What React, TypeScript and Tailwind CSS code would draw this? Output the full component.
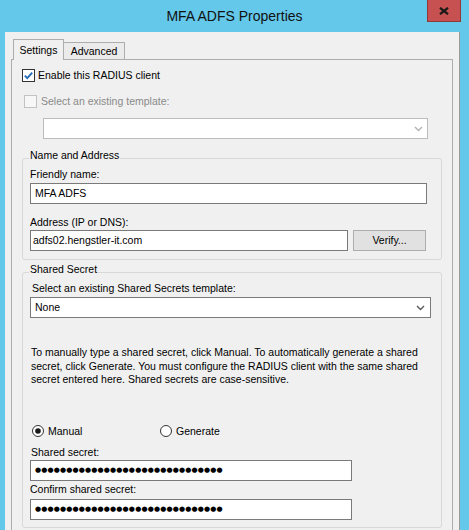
import React from "react";

function CheckBox({ checked, disabled }: { checked?: boolean; disabled?: boolean }) {
  return (
    <svg width="13" height="13" viewBox="0 0 13 13" className="shrink-0">
      <rect x="0.5" y="0.5" width="12" height="12" fill={disabled ? "#f7f7f7" : "#ffffff"} stroke={disabled ? "#c3c3c3" : "#333333"} />
      {checked && (
        <path d="M2.8 6.6 L5.3 9.1 L10.2 3.6" fill="none" stroke="#2b6fb8" strokeWidth="2" />
      )}
    </svg>
  );
}

function Radio({ checked }: { checked?: boolean }) {
  return (
    <svg width="12" height="12" viewBox="0 0 12 12" className="shrink-0">
      <circle cx="6" cy="6" r="5.5" fill="#ffffff" stroke="#333333" />
      {checked && <circle cx="6" cy="6" r="2.8" fill="#1a1a1a" />}
    </svg>
  );
}

function Chevron({ color }: { color: string }) {
  return (
    <svg width="9" height="6" viewBox="0 0 9 6">
      <path d="M1 1 L4.5 4.5 L8 1" fill="none" stroke={color} strokeWidth="1.4" />
    </svg>
  );
}

const DOTS = "●".repeat(30);

export default function App() {
  return (
    <div className="w-[469px] h-[530px] overflow-hidden bg-[#64c8ea] flex flex-col font-['Liberation_Sans',Arial,sans-serif] text-[10.5px] text-black">
      {/* Title bar */}
      <div className="relative h-[32px] shrink-0 flex items-center justify-center">
        <span className="text-[14px] text-[#111] leading-none -mt-[1px]">MFA ADFS Properties</span>
        <div className="absolute top-0 right-[8px] w-[34px] h-[22px] bg-[#c75050] border border-t-0 border-[#8e3a3a] flex items-center justify-center">
          <svg width="10" height="8" viewBox="0 0 10 8">
            <path d="M1 0.8 L9 7.2 M9 0.8 L1 7.2" stroke="#1a1a1a" strokeWidth="2.2" />
          </svg>
        </div>
      </div>

      {/* Client area */}
      <div className="ml-[5px] w-[455px] flex-1 bg-[#f0f0f0] border-r border-[#9a9a9a] pt-[7px]">
        {/* Tabs */}
        <div className="ml-[8px] h-[20px] flex items-end">
          <div className="relative z-10 -mb-[1px] w-[51px] h-[21px] bg-[#f0f0f0] border border-b-0 border-[#adadad] flex items-center justify-center leading-none">
            Settings
          </div>
          <div className="w-[61px] h-[17px] bg-[#ebebeb] border border-b-0 border-l-0 border-[#adadad] flex items-center justify-center leading-none">
            Advanced
          </div>
        </div>

        {/* Panel */}
        <div className="ml-[6px] w-[442px] border border-[#adadad] bg-[#f0f0f0] pt-[9px] pb-[40px]">
          <div className="ml-[10px] h-[13px] flex items-center">
            <CheckBox checked />
            <span className="ml-[3px] leading-[13px]">Enable this RADIUS client</span>
          </div>
          <div className="mt-[13px] ml-[12px] h-[13px] flex items-center">
            <CheckBox disabled />
            <span className="ml-[4px] leading-[13px] text-[#8a8a8a]">Select an existing template:</span>
          </div>
          <div className="mt-[10px] ml-[31px] w-[385px] h-[21px] bg-white border border-[#bcbcbc] flex items-center justify-end pr-[4px]">
            <Chevron color="#b3b3b3" />
          </div>

          {/* Name and Address */}
          <fieldset className="mt-[10px] ml-[10px] w-[420px] border border-[#d8d8d8] rounded-[3px] pl-[7px] pb-[8px]">
            <legend className="leading-[13px] pb-[6px] px-[1px] -ml-[1px]">Name and Address</legend>
            <div className="leading-[13px]">Friendly name:</div>
            <div className="mt-[2px] w-[397px] h-[21px] bg-white border border-[#7a7a7a] px-[4px] flex items-center">
              MFA ADFS
            </div>
            <div className="mt-[12px] leading-[13px]">Address (IP or DNS):</div>
            <div className="mt-[1px] flex">
              <div className="w-[318px] h-[21px] bg-white border border-[#7a7a7a] px-[2px] flex items-center">
                adfs02.hengstler-it.com
              </div>
              <div className="ml-[5px] w-[73px] h-[21px] bg-[#e1e1e1] border border-[#adadad] flex items-center justify-center">
                Verify...
              </div>
            </div>
          </fieldset>

          {/* Shared Secret */}
          <fieldset className="mt-[3px] ml-[10px] w-[420px] border border-[#d8d8d8] rounded-[3px] pl-[7px] pb-[7px]">
            <legend className="leading-[13px] pb-[6px] px-[1px] -ml-[1px]">Shared Secret</legend>
            <div className="leading-[13px] ml-[2px]">Select an existing Shared Secrets template:</div>
            <div className="mt-[2px] w-[401px] h-[21px] bg-white border border-[#7a7a7a] pl-[4px] pr-[5px] flex items-center justify-between">
              <span>None</span>
              <Chevron color="#5a5a5a" />
            </div>
            <p className="mt-[28px] ml-[1px] leading-[13.5px] whitespace-nowrap">
              To manually type a shared secret, click Manual. To automatically generate a shared
              <br />
              secret, click Generate. You must configure the RADIUS client with the same shared
              <br />
              secret entered here. Shared secrets are case-sensitive.
            </p>
            <div className="mt-[38px] h-[13px] flex items-center">
              <div className="w-[130px] flex items-center pl-[2px]">
                <Radio checked />
                <span className="ml-[4px] leading-[13px]">Manual</span>
              </div>
              <div className="flex items-center">
                <Radio />
                <span className="ml-[4px] leading-[13px]">Generate</span>
              </div>
            </div>
            <div className="mt-[8px] leading-[13px] ml-[1px]">Shared secret:</div>
            <div className="mt-[1px] w-[322px] h-[21px] bg-white border border-[#7a7a7a] pl-[4px] flex items-center overflow-hidden">
              <span className="font-['DejaVu_Sans',sans-serif] text-[7px] tracking-[0.15px] leading-none">{DOTS}</span>
            </div>
            <div className="mt-[2px] leading-[13px]">Confirm shared secret:</div>
            <div className="mt-[3px] w-[322px] h-[21px] bg-white border border-[#7a7a7a] pl-[4px] flex items-center overflow-hidden">
              <span className="font-['DejaVu_Sans',sans-serif] text-[7px] tracking-[0.15px] leading-none">{DOTS}</span>
            </div>
          </fieldset>
        </div>
      </div>
    </div>
  );
}
